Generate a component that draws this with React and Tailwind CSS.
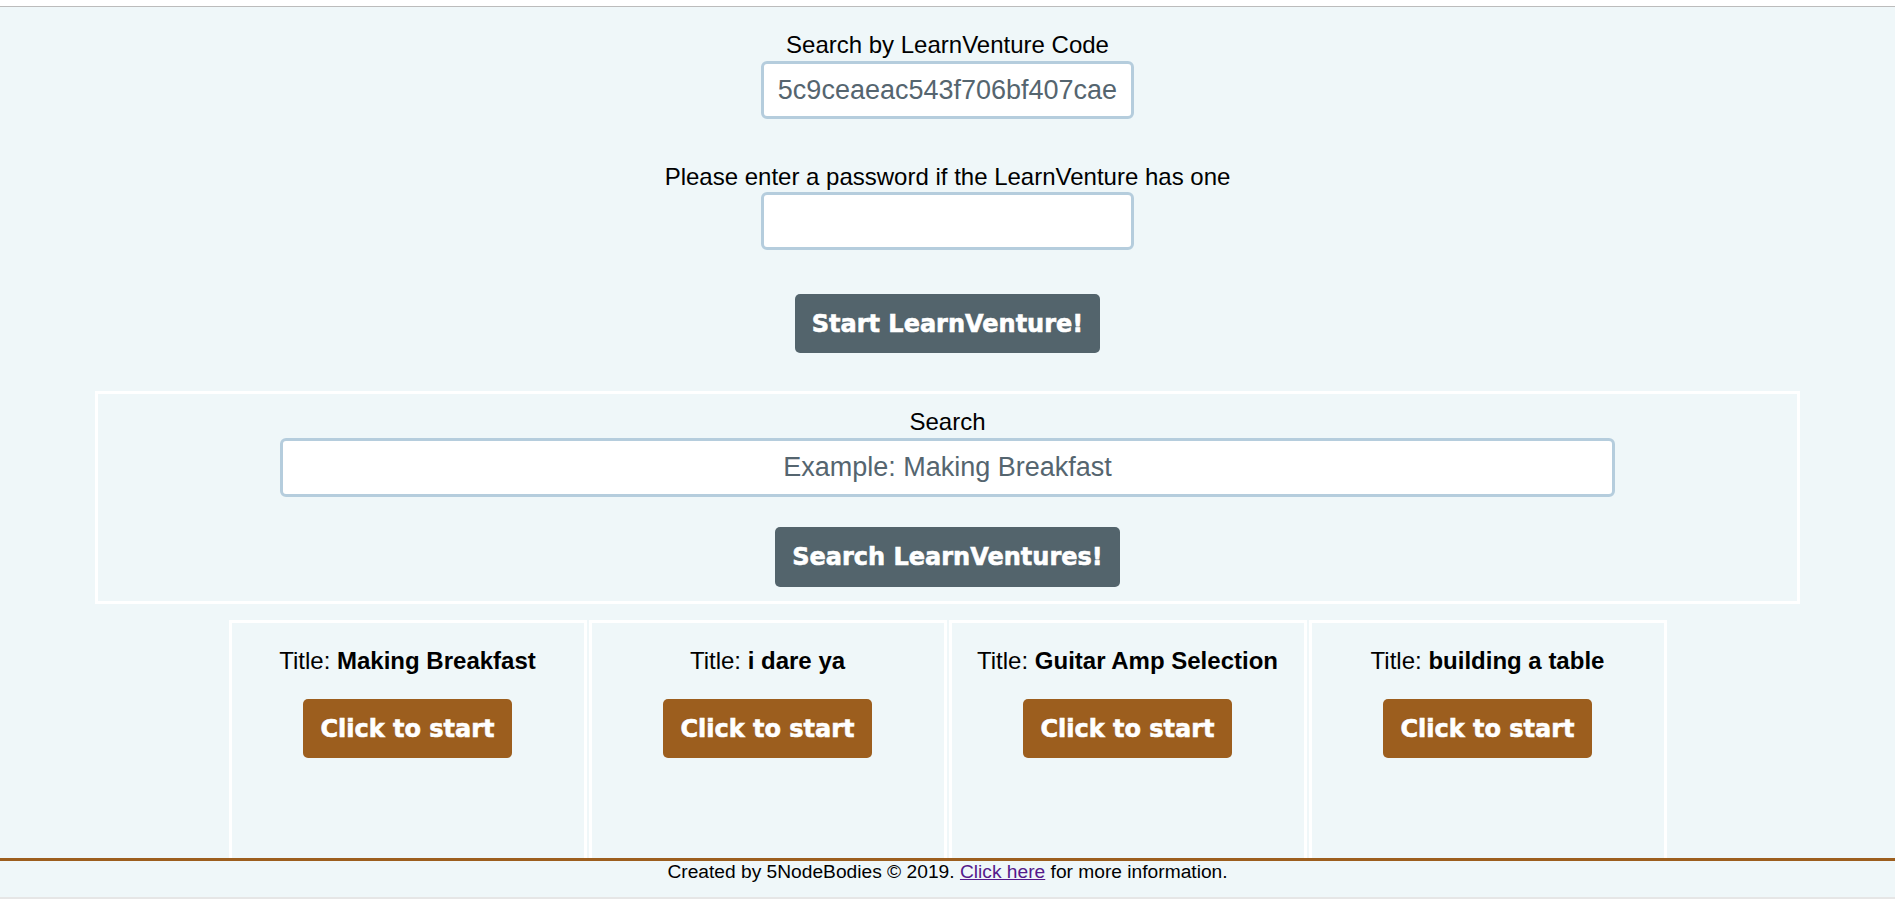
const cards = ['Making Breakfast', 'i dare ya', 'Guitar Amp Selection', 'building a table'];

function BigButton({ children, className = '' }) {
  return (
    <button
      className={`rounded-[5px] px-[17px] text-white text-[24px] font-bold font-['DejaVu_Sans',sans-serif] [-webkit-text-stroke:0.6px_white] ${className}`}
    >
      {children}
    </button>
  );
}

function TextBox({ value, placeholder, className = '' }) {
  return (
    <input
      defaultValue={value}
      placeholder={placeholder}
      className={`bg-white border-[3px] border-[#b5cddd] rounded-[6px] text-center text-[27px] text-[#55656f] placeholder:text-[#55656f] outline-none ${className}`}
    />
  );
}

function Card({ title }) {
  return (
    <div className="w-[358px] h-[262px] border-[3px] border-white flex flex-col items-center pt-[24px]">
      <p className="text-[24px] leading-[27px] text-black">
        Title: <span className="font-bold">{title}</span>
      </p>
      <BigButton className="mt-[25px] h-[59px] bg-[#9c5e1e]">Click to start</BigButton>
    </div>
  );
}

export default function App() {
  return (
    <div className="min-h-screen bg-[#eff7f9] font-['Liberation_Sans',Arial,sans-serif] text-black">
      <div className="h-[7px] bg-white border-b border-[#bcbcbc]" />

      <div className="flex flex-col items-center pt-[24px]">
        <label className="text-[24px] leading-[27px]">Search by LearnVenture Code</label>
        <TextBox value="5c9ceaeac543f706bf407cae" className="mt-[3px] w-[373px] h-[58px]" />
        <label className="mt-[44px] text-[24px] leading-[27px]">Please enter a password if the LearnVenture has one</label>
        <TextBox className="mt-[2px] w-[373px] h-[58px]" />
        <BigButton className="mt-[44px] h-[59px] bg-[#53646c]">Start LearnVenture!</BigButton>
      </div>

      <div className="mx-auto mt-[38px] w-[1705px] border-[3px] border-white flex flex-col items-center pt-[14px] pb-[14px]">
        <label className="text-[24px] leading-[27px]">Search</label>
        <TextBox placeholder="Example: Making Breakfast" className="mt-[3px] w-[1335px] h-[59px]" />
        <BigButton className="mt-[30px] h-[60px] bg-[#53646c]">Search LearnVentures!</BigButton>
      </div>

      <div className="flex justify-center gap-[2px] mt-[16px]">
        {cards.map((t) => (
          <Card key={t} title={t} />
        ))}
      </div>

      <footer className="fixed bottom-0 left-0 right-0 h-[41px] bg-[#eff7f9] border-t-[3px] border-[#9c5e1e] border-b-2 border-b-[#e6e6e6] text-center text-[19.2px] leading-[20px] pt-[1px]">
        Created by 5NodeBodies © 2019. <a href="#" className="text-[#551a8b] underline">Click here</a> for more information.
      </footer>
    </div>
  );
}
